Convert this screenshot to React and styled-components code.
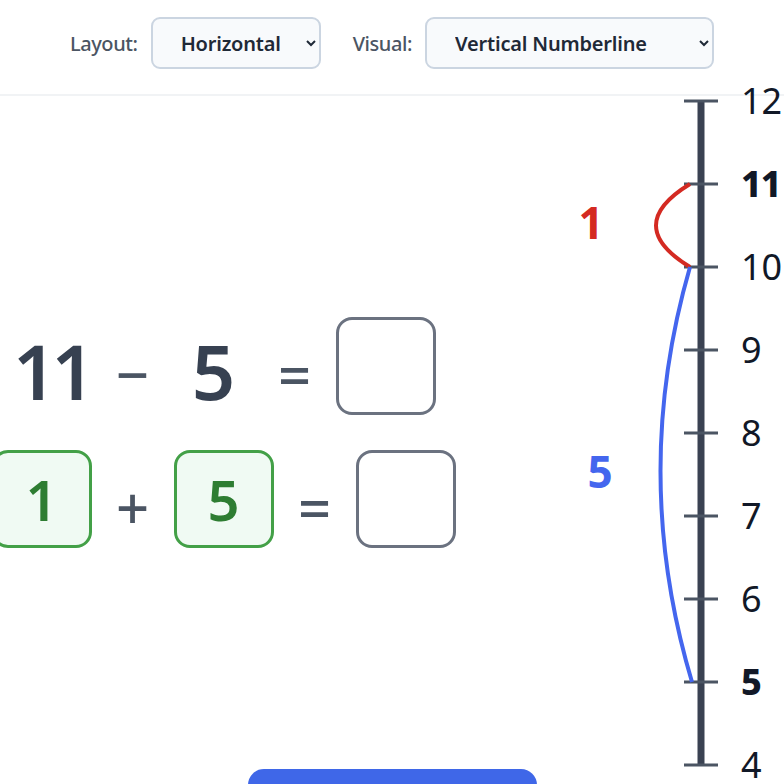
import React, { useState } from "react";
import styled, { createGlobalStyle } from "styled-components";

const GlobalStyle = createGlobalStyle`
  body {
    margin: 0;
    background: #ffffff;
    font-family: "Noto Sans", "Open Sans", sans-serif;
    overflow: hidden;
  }
`;

const Page = styled.div`
  display: flex;
  flex-direction: column;
  width: 784px;
`;

const Header = styled.header`
  display: flex;
  justify-content: center;
  align-items: center;
  gap: 32px;
  padding: 17px 0 25px;
  border-bottom: 2px solid #f1f3f5;
`;

const Field = styled.label`
  display: flex;
  align-items: center;
  gap: 13px;
  font-size: 20px;
  font-weight: 500;
  color: #4b5563;
  letter-spacing: -0.4px;
`;

const Select = styled.select`
  width: ${(p) => p.$width}px;
  height: 52px;
  padding: 0 10px 0 24px;
  border: 2px solid #cbd5e1;
  border-radius: 9px;
  background: #f8fafc;
  color: #1f2937;
  font-family: "Noto Sans", sans-serif;
  font-size: 20px;
  font-weight: 600;
  letter-spacing: -0.2px;
`;

const Main = styled.main`
  display: grid;
  grid-template-columns: 447px 1fr;
  height: 673px;
`;

const EquationPanel = styled.section`
  display: flex;
  flex-direction: column;
  justify-content: center;
  gap: 35px;
`;

const Row = styled.div`
  display: flex;
  justify-content: center;
  align-items: center;
  gap: 24px;
  height: 98px;
`;

const Number = styled.div`
  width: 80px;
  flex: none;
  text-align: center;
  font-size: 76px;
  font-weight: 600;
  line-height: 1;
  letter-spacing: ${(p) => (p.$tight ? "-5px" : "0")};
  color: #374151;
  padding-top: 10px;
`;

const Op = styled.div`
  width: 34px;
  flex: none;
  text-align: center;
  font-size: 58px;
  font-weight: 500;
  line-height: 1;
  color: #4b5563;
  padding-top: 16px;
`;

const Box = styled.div`
  width: 100px;
  height: 98px;
  flex: none;
  box-sizing: border-box;
  display: flex;
  align-items: center;
  justify-content: center;
  border-radius: 16px;
  border: 3px solid ${(p) => (p.$part ? "#43a047" : "#6b7280")};
  background: ${(p) => (p.$part ? "#f0faf3" : "#ffffff")};
  color: #2e7d32;
  font-size: 56px;
  font-weight: 600;
  line-height: 1;
`;

const LineColumn = styled.div`
  position: relative;
`;

const LineSvg = styled.svg`
  display: block;
  overflow: visible;
  font-family: "Noto Sans", sans-serif;
`;

const Footer = styled.div`
  display: flex;
  justify-content: center;
`;

const CheckButton = styled.button`
  width: 289px;
  height: 56px;
  border: none;
  border-radius: 16px;
  background: #3f67e8;
  cursor: pointer;
`;

const AXIS_X = 254;
const TOP = 5;
const STEP = 83;
const values = [12, 11, 10, 9, 8, 7, 6, 5, 4];
const yOf = (v) => TOP + (12 - v) * STEP;

function NumberLine() {
  return (
    <LineSvg width="337" height="673" viewBox="0 0 337 673">
      <line x1={AXIS_X} y1={yOf(12)} x2={AXIS_X} y2={yOf(4)} stroke="#3a4252" strokeWidth="7" />
      {values.map((v) => {
        const strong = v === 11 || v === 5;
        return (
          <g key={v}>
            <line x1={AXIS_X - 17} y1={yOf(v)} x2={AXIS_X + 17} y2={yOf(v)} stroke="#4b5563" strokeWidth="3" />
            <text
              x={AXIS_X + 40}
              y={yOf(v) + 13}
              fontSize="36"
              fontWeight={strong ? 800 : 400}
              letterSpacing={strong ? "-1" : "0"}
              fill="#111827"
            >
              {v}
            </text>
          </g>
        );
      })}
      <path
        d={`M ${AXIS_X - 11} ${yOf(11)} Q 175 ${(yOf(11) + yOf(10)) / 2} ${AXIS_X - 11} ${yOf(10)}`}
        fill="none"
        stroke="#d42a22"
        strokeWidth="4"
      />
      <path
        d={`M ${AXIS_X - 11} ${yOf(10)} Q 183 ${yOf(7.5)} ${AXIS_X - 9} ${yOf(5)}`}
        fill="none"
        stroke="#4466ee"
        strokeWidth="4"
      />
      <text x="144" y="143" fontSize="44" fontWeight="700" fill="#d42a22" textAnchor="middle">
        1
      </text>
      <text x="153" y="392" fontSize="44" fontWeight="700" fill="#4466ee" textAnchor="middle">
        5
      </text>
    </LineSvg>
  );
}

export default function App() {
  const [layout, setLayout] = useState("horizontal");
  const [visual, setVisual] = useState("vertical");

  return (
    <Page>
      <GlobalStyle />
      <Header>
        <Field>
          Layout:
          <Select $width={170} value={layout} onChange={(e) => setLayout(e.target.value)}>
            <option value="horizontal">Horizontal</option>
            <option value="vertical">Vertical</option>
          </Select>
        </Field>
        <Field>
          Visual:
          <Select $width={289} value={visual} onChange={(e) => setVisual(e.target.value)}>
            <option value="vertical">Vertical Numberline</option>
            <option value="horizontal">Horizontal Numberline</option>
          </Select>
        </Field>
      </Header>
      <Main>
        <EquationPanel>
          <Row>
            <Number $tight>11</Number>
            <Op>−</Op>
            <Number>5</Number>
            <Op>=</Op>
            <Box />
          </Row>
          <Row>
            <Box $part>1</Box>
            <Op>+</Op>
            <Box $part>5</Box>
            <Op>=</Op>
            <Box />
          </Row>
        </EquationPanel>
        <LineColumn>
          <NumberLine />
        </LineColumn>
      </Main>
      <Footer>
        <CheckButton aria-label="Check" />
      </Footer>
    </Page>
  );
}
